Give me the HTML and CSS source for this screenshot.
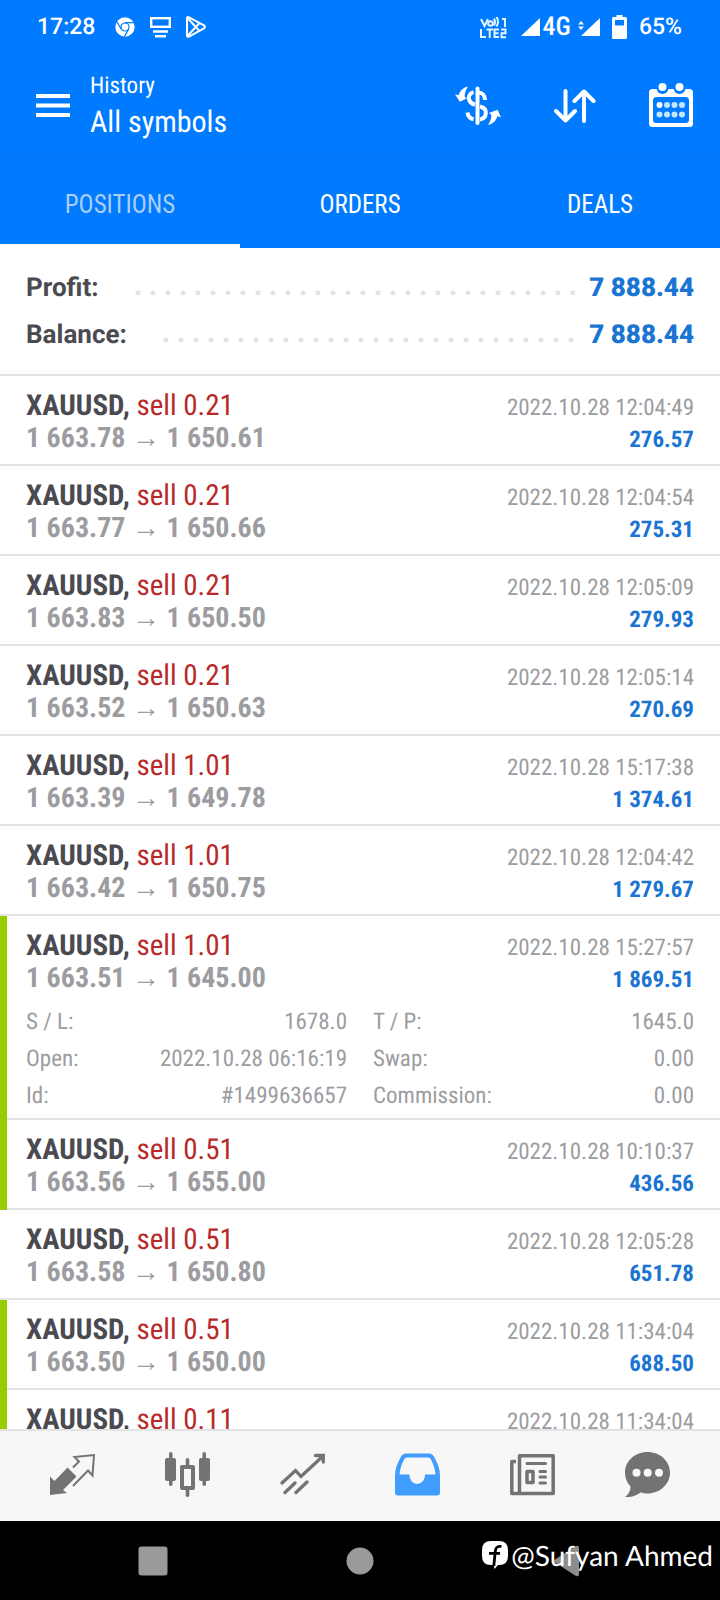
FILE: index.html
```html
<!DOCTYPE html>
<html lang="en">
<head>
<meta charset="utf-8">
<meta name="viewport" content="width=device-width, initial-scale=1">
<title>History</title>
<link rel="stylesheet" href="styles.css">
</head>
<body>
<div class="app">
  <div class="statusbar">
    <span class="clock">17:28</span>
    <svg class="st-chrome" width="20" height="20" viewBox="0 0 20 20"><circle cx="10" cy="10" r="9.7" fill="#fff"/><circle cx="10" cy="10" r="4" fill="#fff" stroke="#007aff" stroke-width="1.2"/><path d="M10 5.7H18.7M6.3 12.1L1.9 4.9M13.7 12.1L9.3 19.6" stroke="#007aff" stroke-width="1.2"/></svg>
    <svg class="st-cast" width="21" height="21" viewBox="0 0 21 21" fill="none" stroke="#fff"><rect x="1.200" y="1.200" width="18.600" height="8.600" stroke-width="2.400"/><path d="M3 14.500H18M5 19.300H16" stroke-width="2.400"/></svg>
    <svg class="st-play" width="20" height="22" viewBox="0 0 20 22" fill="none" stroke="#fff" stroke-width="2" stroke-linejoin="round"><path d="M1 2.500Q1 .4 3 1.400L18 9.300Q20 10.900 18 12.300L3 20.600Q1 21.400 1 19.500Z"/><path d="M1.500 2L13.500 15M1.500 20L13.500 7"/></svg>
    <svg class="st-volte" width="27" height="23" viewBox="0 0 27 23" fill="none" stroke="#e4f6ff" stroke-width="2"><path d="M1 3L4.500 10 8 3M14 2.500Q16 6 14 9.500M16.500 1Q19.500 5.500 16.500 10.500M22 3H25V11M1 13V21H6M6.500 13.500H13M9.700 13.500V22M19 13.500H14.500V21H19M14.500 17.300H18.500M21 13.500H25.500V17.300H21.500V21.200H26"/><circle cx="10.500" cy="7.500" r="2.300"/></svg>
    <svg class="st-sig" width="19" height="18" viewBox="0 0 19 18"><path d="M19 0V18H0Z" fill="#fff"/></svg>
    <span class="net">4G</span>
    <svg class="st-data" width="22" height="18" viewBox="0 0 22 18" fill="#fff"><path d="M22 0V18H3ZM0 6.500L3 3 6 6.500ZM0 8.500H6L3 12Z"/></svg>
    <svg class="st-batt" width="15" height="24" viewBox="0 0 15 24"><path fill="#fff" fill-rule="evenodd" d="M4.500 0H10.500V2H13.500Q15 2 15 3.500V22.500Q15 24 13.500 24H1.500Q0 24 0 22.500V3.500Q0 2 1.500 2H4.500ZM3 5V10.500H12V5Z"/></svg>
    <span class="pct">65%</span>
  </div>

  <header class="header">
    <button class="icon-btn menu" aria-label="Menu"><svg width="34" height="24" viewBox="0 0 34 24"><path d="M0 2H34M0 11.500H34M0 21H34" stroke="#fff" stroke-width="4"/></svg></button>
    <h1 class="heading"><span class="heading-top">History</span><span class="heading-main">All symbols</span></h1>
    <div class="actions">
      <button class="icon-btn" aria-label="Currency"><svg width="46" height="40" viewBox="0 0 46 40" fill="none" stroke="#fff"><path d="M22.500 2.500V37" stroke-width="4" stroke-linecap="round"/><path d="M30 14C30 9.500 27.500 6.800 24 6.800M18.500 6.200C14 7.500 13.200 11 14.200 14 15.200 17 17.500 18 20 18.900M25 20.500C29.500 21.500 31.200 24 30.800 27.500 30.400 31 28 33 25 33.400M12.500 26.500C13 30.500 15 32.500 18.500 33.200" stroke-width="4"/><path fill="#fff" stroke="none" d="M13 .5C8.500 1.500 4.800 4.500 3.800 9.300L0 8.300 4.800 15.700 11.500 12.600 9.600 10.600C9.500 7 11 3.500 13 .5ZM33 39C37.500 38 41.200 35 42.200 30.200L46 31.200 42.500 23.800 34 26.900 36.400 28.900C36.500 32.500 35 36 33 39Z"/></svg></button>
      <button class="icon-btn" aria-label="Sort"><svg width="42" height="34" viewBox="0 0 42 34" fill="none" stroke="#fff" stroke-width="4" stroke-linecap="round" stroke-linejoin="round"><path d="M11.500 2V31.500M2 22L11.500 31.500 21 22M30 32V2.500M20.500 12L30 2.500 39.500 12"/></svg></button>
      <button class="icon-btn" aria-label="Choose dates"><svg width="44" height="46" viewBox="0 -1 44 46"><path fill="#fff" fill-rule="evenodd" d="M3.500 5H40.500Q44 5 44 8.500V39.500Q44 43 40.500 43H3.500Q0 43 0 39.500V8.500Q0 5 3.500 5ZM7.500 13Q4 13 4 16.500V36Q4 39 7.500 39H36.500Q40 39 40 36V16.500Q40 13 36.500 13Z"/><g fill="#007aff"><circle cx="13.500" cy="4" r="6"/><circle cx="30.500" cy="4" r="6"/></g><g fill="#fff"><circle cx="13.500" cy="3" r="4"/><circle cx="30.500" cy="3" r="4"/></g><g fill="#c5e6ff"><circle cx="10.500" cy="21" r="3" fill="#fff"/><circle cx="18" cy="21" r="3"/><circle cx="25.500" cy="21" r="3"/><circle cx="33" cy="21" r="3"/><circle cx="10.500" cy="30.500" r="3"/><circle cx="18" cy="30.500" r="3"/><circle cx="25.500" cy="30.500" r="3"/><circle cx="33" cy="30.500" r="3"/></g></svg></button>
    </div>
  </header>

  <nav class="tabs">
    <button class="tab tab-active">POSITIONS</button>
    <button class="tab">ORDERS</button>
    <button class="tab">DEALS</button>
  </nav>

  <section class="summary">
    <div class="sum-row"><span>Profit:</span><i class="dots"></i><b class="sum-value">7 888.44</b></div>
    <div class="sum-row"><span>Balance:</span><i class="dots"></i><b class="sum-value">7 888.44</b></div>
  </section>

  <main class="list">
    <article class="deal"><div class="line"><span><b class="symbol">XAUUSD,</b> <span class="side">sell 0.21</span></span><time class="muted">2022.10.28 12:04:49</time></div><div class="line"><b class="price">1 663.78 <span class="arrow">→</span> 1 650.61</b><b class="gain">276.57</b></div></article>
    <article class="deal"><div class="line"><span><b class="symbol">XAUUSD,</b> <span class="side">sell 0.21</span></span><time class="muted">2022.10.28 12:04:54</time></div><div class="line"><b class="price">1 663.77 <span class="arrow">→</span> 1 650.66</b><b class="gain">275.31</b></div></article>
    <article class="deal"><div class="line"><span><b class="symbol">XAUUSD,</b> <span class="side">sell 0.21</span></span><time class="muted">2022.10.28 12:05:09</time></div><div class="line"><b class="price">1 663.83 <span class="arrow">→</span> 1 650.50</b><b class="gain">279.93</b></div></article>
    <article class="deal"><div class="line"><span><b class="symbol">XAUUSD,</b> <span class="side">sell 0.21</span></span><time class="muted">2022.10.28 12:05:14</time></div><div class="line"><b class="price">1 663.52 <span class="arrow">→</span> 1 650.63</b><b class="gain">270.69</b></div></article>
    <article class="deal"><div class="line"><span><b class="symbol">XAUUSD,</b> <span class="side">sell 1.01</span></span><time class="muted">2022.10.28 15:17:38</time></div><div class="line"><b class="price">1 663.39 <span class="arrow">→</span> 1 649.78</b><b class="gain">1 374.61</b></div></article>
    <article class="deal"><div class="line"><span><b class="symbol">XAUUSD,</b> <span class="side">sell 1.01</span></span><time class="muted">2022.10.28 12:04:42</time></div><div class="line"><b class="price">1 663.42 <span class="arrow">→</span> 1 650.75</b><b class="gain">1 279.67</b></div></article>
    <article class="deal deal-tp deal-open"><div class="line"><span><b class="symbol">XAUUSD,</b> <span class="side">sell 1.01</span></span><time class="muted">2022.10.28 15:27:57</time></div><div class="line"><b class="price">1 663.51 <span class="arrow">→</span> 1 645.00</b><b class="gain">1 869.51</b></div>
      <dl class="details">
        <div class="pair"><dt>S / L:</dt><dd>1678.0</dd></div><div class="pair"><dt>T / P:</dt><dd>1645.0</dd></div>
        <div class="pair"><dt>Open:</dt><dd>2022.10.28 06:16:19</dd></div><div class="pair"><dt>Swap:</dt><dd>0.00</dd></div>
        <div class="pair"><dt>Id:</dt><dd>#1499636657</dd></div><div class="pair"><dt>Commission:</dt><dd>0.00</dd></div>
      </dl>
    </article>
    <article class="deal deal-tp"><div class="line"><span><b class="symbol">XAUUSD,</b> <span class="side">sell 0.51</span></span><time class="muted">2022.10.28 10:10:37</time></div><div class="line"><b class="price">1 663.56 <span class="arrow">→</span> 1 655.00</b><b class="gain">436.56</b></div></article>
    <article class="deal"><div class="line"><span><b class="symbol">XAUUSD,</b> <span class="side">sell 0.51</span></span><time class="muted">2022.10.28 12:05:28</time></div><div class="line"><b class="price">1 663.58 <span class="arrow">→</span> 1 650.80</b><b class="gain">651.78</b></div></article>
    <article class="deal deal-tp"><div class="line"><span><b class="symbol">XAUUSD,</b> <span class="side">sell 0.51</span></span><time class="muted">2022.10.28 11:34:04</time></div><div class="line"><b class="price">1 663.50 <span class="arrow">→</span> 1 650.00</b><b class="gain">688.50</b></div></article>
    <article class="deal deal-tp"><div class="line"><span><b class="symbol">XAUUSD,</b> <span class="side">sell 0.11</span></span><time class="muted">2022.10.28 11:34:04</time></div></article>
  </main>

  <nav class="bottom-nav">
    <button class="icon-btn" aria-label="Quotes"><svg width="45" height="45" viewBox="0 0 45 45"><path fill="#737373" d="M17.500 15.500L26.500 24.500 13 38 17 41 0 43V24.500L4.500 29Z"/><path fill="none" stroke="#737373" stroke-width="2" d="M23 15.500L29 9.500 24.500 5 44 3 42.500 23.500 38 18.500 23 34"/></svg></button>
    <button class="icon-btn" aria-label="Charts"><svg width="45" height="45" viewBox="0 0 45 45" fill="#737373"><rect y="6" width="11" height="23" rx="2"/><rect x="4" width="3.500" height="34" rx="1.700"/><rect x="34" y="6" width="11" height="23" rx="2"/><rect x="37.500" width="3.500" height="34" rx="1.700"/><rect x="20.700" y="6" width="3.600" height="10" rx="1.700"/><rect x="20.700" y="35" width="3.600" height="10" rx="1.700"/><path fill-rule="evenodd" d="M17 13H28Q30 13 30 15V36Q30 38 28 38H17Q15 38 15 36V15Q15 13 17 13ZM19 17V34H26V17Z"/></svg></button>
    <button class="icon-btn" aria-label="Trade"><svg width="45" height="45" viewBox="0 0 45 45" fill="none" stroke="#737373" stroke-width="3.300" stroke-linecap="round"><path d="M2 31L15.500 18.500 21 24.500 42 5M35.500 3.500H43.300V10M5 40.500L15 31M16 40.500L27 30"/></svg></button>
    <button class="icon-btn" aria-label="History"><svg width="45" height="45" viewBox="0 0 45 45"><path fill="#409cff" fill-rule="evenodd" d="M11 1.500H34Q37.500 1.500 39.500 5.500C43 12 45 17 45 24V40.500Q45 43.500 42 43.500H3Q0 43.500 0 40.500V24C0 17 2 12 5.500 5.500Q7.500 1.500 11 1.500ZM12 5.500Q10 5.500 9 7.500C6.500 12.500 5 17 4.500 22.500H14.500C14.500 35 30 35 30 22.500H40.500C40 17 38.500 12.500 36 7.500Q35 5.500 33 5.500Z"/></svg></button>
    <button class="icon-btn" aria-label="News"><svg width="45" height="45" viewBox="0 0 45 45" fill="none" stroke="#737373" stroke-width="3.500" stroke-linejoin="round"><path d="M9.500 3.800H43.200V41.500H9.500ZM6 9.500H1.800V41.500H9.500"/><path d="M17 11.500H35.500M30 19.500H35.500M30 25H35.500M30 31H35.500" stroke-width="3" stroke-linecap="round"/><rect x="17" y="19.500" width="6" height="11"/></svg></button>
    <button class="icon-btn" aria-label="Messages"><svg width="45" height="45" viewBox="0 0 45 45"><path fill="#737373" d="M22.500 0C35 0 45 9 45 20.500S35 41.500 22.500 41.500C20 41.500 17.500 41 15.500 40.500C11 44 6 45.500 0 45C3.500 42.500 5.500 39 5.500 34.500C2 31 0 26 0 20.500C0 9 10 0 22.500 0Z"/><g fill="#f7f7f7"><circle cx="11.500" cy="20.800" r="4"/><circle cx="22.700" cy="20.800" r="4"/><circle cx="34" cy="20.800" r="4"/></g></svg></button>
  </nav>

  <div class="sysbar">
    <button class="icon-btn" aria-label="Recent apps"><svg width="30" height="32" viewBox="0 0 30 32"><rect x=".5" y="1.500" width="29" height="29" rx="3" fill="#9a9a9a"/></svg></button>
    <button class="icon-btn" aria-label="Home"><svg width="30" height="32" viewBox="0 0 30 32"><circle cx="15" cy="16" r="13.500" fill="#9a9a9a"/></svg></button>
    <button class="icon-btn" aria-label="Back"><svg width="30" height="32" viewBox="0 0 30 32"><path d="M3 14.500L24 1Q27 0 27 3V29Q27 32 24 31L3 17.500Q1 16 3 14.500Z" fill="#8c8c8c"/></svg></button>
    <div class="credit"><svg width="26" height="28" viewBox="0 0 26 28"><path fill="#fff" d="M9 0H17Q26 0 26 9V15Q26 24 17 24H16L12.500 28 11.500 24H9Q0 24 0 15V9Q0 0 9 0Z"/><path d="M19.500 5.500C15 4.500 13.500 7 13.200 11L11.800 25M7 12.300H18" fill="none" stroke="#000" stroke-width="2.800"/></svg><span>@Sufyan Ahmed</span></div>
  </div>
</div>
</body>
</html>
```
FILE: styles.css
```css
* { box-sizing: border-box; }
body {
  margin: 0;
  font-family: "Roboto Condensed", "Liberation Sans Narrow", Roboto, sans-serif;
  color: #4a4a50;
  background: #fff;
  text-rendering: geometricPrecision;
}
button { border: 0; padding: 0; background: none; font: inherit; color: inherit; }
svg { display: block; flex: none; }
.app { display: flex; flex-direction: column; height: 100vh; }

.statusbar {
  display: flex;
  align-items: center;
  flex: none;
  height: 54px;
  padding: 0 38px 0 37px;
  background: #007aff;
  color: #fff;
}
.clock, .pct { font: 500 23px/28px Roboto, sans-serif; }
.st-chrome { margin-left: 20px; }
.st-cast { margin-left: 15px; }
.st-play { margin-left: 15px; }
.st-volte { margin-left: auto; }
.st-sig { margin-left: 14px; }
.net { margin-left: 3px; font-size: 26px; font-weight: 500; }
.st-data { margin-left: 7px; }
.st-batt { margin-left: 12px; }
.pct { margin-left: 12px; }

.header {
  display: flex;
  align-items: center;
  flex: none;
  height: 104px;
  padding: 0 27px 0 36px;
  background: #007aff;
  border-bottom: 1px solid #0a72e6;
  color: #fff;
}
.heading { display: flex; flex-direction: column; margin: 0 0 0 20px; font-weight: 400; }
.heading-top { font-size: 23px; line-height: 34px; }
.heading-main { font-size: 30px; line-height: 40px; }
.actions { display: flex; align-items: center; gap: 53px; margin-left: auto; }

.tabs { display: flex; flex: none; height: 90px; background: #007aff; color: #fff; }
.tab { flex: 1; padding-top: 6px; font-size: 25px; border-bottom: 4px solid #007aff; }
.tab-active { color: #a9cff8; border-bottom-color: #fff; }

.summary {
  flex: none;
  padding: 17px 26px 15px;
  border-bottom: 2px solid #e3e3e3;
  font: 700 26px/47px Roboto, sans-serif;
}
.sum-row { display: flex; align-items: center; }
.dots {
  flex: 1;
  height: 5px;
  margin: 8px 14px 0 36px;
  background: radial-gradient(circle at 3px 3px, #e3e3e3 2px, transparent 3px) 0 0 / 15px 5px;
}
.sum-value { color: #1a75d2; }

.list { flex: 1; min-height: 0; overflow: hidden; }
.deal { position: relative; padding: 14px 26px 10px; border-bottom: 2px solid #e3e3e3; }
.deal-open { padding-bottom: 4px; }
.deal-tp::before {
  content: "";
  position: absolute;
  left: 0;
  top: 0;
  bottom: -2px;
  width: 7px;
  background: #99cc00;
}
.line { display: flex; justify-content: space-between; align-items: baseline; height: 32px; font-size: 29px; line-height: 32px; }
.side { color: #b82a2a; }
.muted { font-size: 23px; color: #9c9ca1; }
.price { font-size: 28px; color: #9c9ca1; }
.gain { font-size: 23px; color: #1a75d2; }
.details {
  display: grid;
  grid-template-columns: 1fr 1fr;
  column-gap: 26px;
  margin: 9px 0 0;
  font-size: 23px;
  line-height: 37px;
  color: #9c9ca1;
}
.pair { display: flex; justify-content: space-between; }
.pair dd { margin: 0; }

.bottom-nav {
  display: flex;
  flex: none;
  align-items: center;
  height: 92px;
  padding: 0 15px 3px;
  background: #f7f7f7;
  border-top: 2px solid #e3e3e3;
}
.bottom-nav .icon-btn { flex: 1; display: flex; justify-content: center; }

.sysbar { position: relative; display: flex; flex: none; align-items: center; height: 79px; padding: 0 50px; background: #000; }
.sysbar .icon-btn { flex: 1; display: flex; justify-content: center; }
.credit {
  position: absolute;
  right: 7px;
  top: 16px;
  display: flex;
  align-items: center;
  gap: 3px;
  font: 400 28px/36px Lato, sans-serif;
  color: #fff;
}
```
